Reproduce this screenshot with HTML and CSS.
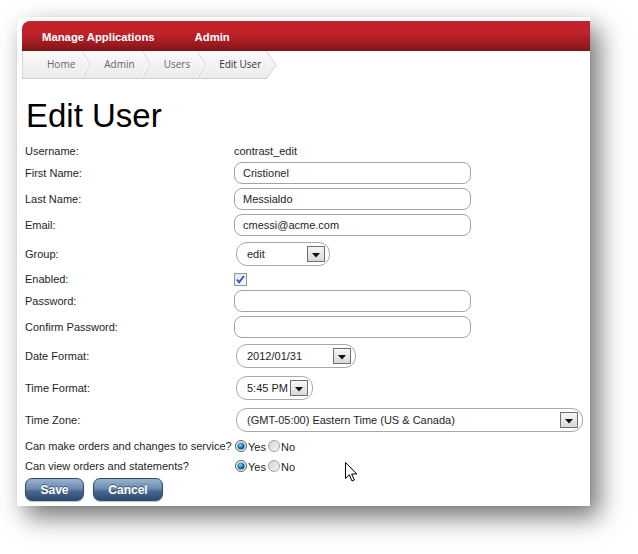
FILE: index.html
```html
<!DOCTYPE html>
<html>
<head>
<meta charset="utf-8">
<link rel="stylesheet" href="styles.css">
</head>
<body>
<div class="card">
  <div class="topnav">
    <span class="nav-item">Manage Applications</span>
    <span class="nav-item">Admin</span>
  </div>
  <div class="crumbs">
    <div class="crumb-bar">
      <span class="crumb first">Home</span>
      <svg class="sep" width="10" height="27" viewBox="0 0 10 27"><path d="M1.5 0 L9 13.5 L1.5 27" fill="none" stroke="#d2d2d2"/><path d="M0.5 0 L8 13.5 L0.5 27" fill="none" stroke="#ffffff" stroke-opacity="0.8"/></svg>
      <span class="crumb">Admin</span>
      <svg class="sep" width="10" height="27" viewBox="0 0 10 27"><path d="M1.5 0 L9 13.5 L1.5 27" fill="none" stroke="#d2d2d2"/><path d="M0.5 0 L8 13.5 L0.5 27" fill="none" stroke="#ffffff" stroke-opacity="0.8"/></svg>
      <span class="crumb">Users</span>
      <svg class="sep" width="10" height="27" viewBox="0 0 10 27"><path d="M1.5 0 L9 13.5 L1.5 27" fill="none" stroke="#d2d2d2"/><path d="M0.5 0 L8 13.5 L0.5 27" fill="none" stroke="#ffffff" stroke-opacity="0.8"/></svg>
      <span class="crumb current">Edit User</span>
    </div>
    <svg class="sep-end" width="11" height="28" viewBox="0 0 11 28">
      <defs><linearGradient id="cg" x1="0" y1="0" x2="0" y2="1"><stop offset="0" stop-color="#fafafa"/><stop offset="1" stop-color="#ebebeb"/></linearGradient></defs>
      <polygon points="0,0 10,14 0,28" fill="url(#cg)"/>
      <path d="M0 0 L10.3 14 L0 28" fill="none" stroke="#cfcfcf"/>
    </svg>
  </div>

  <div class="content">
    <h1 class="title">Edit User</h1>
    <div class="form">
      <div class="row r-text"><span class="lbl">Username:</span><span class="val">contrast_edit</span></div>
      <div class="row r-input"><span class="lbl">First Name:</span><span class="field">Cristionel</span></div>
      <div class="row r-input"><span class="lbl">Last Name:</span><span class="field">Messialdo</span></div>
      <div class="row r-input"><span class="lbl">Email:</span><span class="field">cmessi@acme.com</span></div>
      <div class="row r-select"><span class="lbl">Group:</span>
        <span class="select w-group"><span>edit</span><span class="arrow"><svg width="8" height="5" viewBox="0 0 8 5"><polygon points="0,0 8,0 4,4.5" fill="#111"/></svg></span></span>
      </div>
      <div class="row r-check"><span class="lbl">Enabled:</span>
        <span class="check"><svg width="13" height="13" viewBox="0 0 13 13"><defs><linearGradient id="kb" x1="0" y1="0" x2="1" y2="1"><stop offset="0" stop-color="#dfe3ee"/><stop offset="1" stop-color="#fbfbfd"/></linearGradient></defs><rect x="0.5" y="0.5" width="12" height="12" fill="url(#kb)" stroke="#8f95a6"/><path d="M3 6.5 L5.2 9.3 L10 3" fill="none" stroke="#3a4fa8" stroke-width="1.8"/></svg></span>
      </div>
      <div class="row r-input"><span class="lbl">Password:</span><span class="field"></span></div>
      <div class="row r-input"><span class="lbl">Confirm Password:</span><span class="field"></span></div>
      <div class="row r-select"><span class="lbl">Date Format:</span>
        <span class="select w-date"><span>2012/01/31</span><span class="arrow"><svg width="8" height="5" viewBox="0 0 8 5"><polygon points="0,0 8,0 4,4.5" fill="#111"/></svg></span></span>
      </div>
      <div class="row r-select"><span class="lbl">Time Format:</span>
        <span class="select w-time"><span>5:45 PM</span><span class="arrow"><svg width="8" height="5" viewBox="0 0 8 5"><polygon points="0,0 8,0 4,4.5" fill="#111"/></svg></span></span>
      </div>
      <div class="row r-select"><span class="lbl">Time Zone:</span>
        <span class="select w-tz"><span>(GMT-05:00) Eastern Time (US &amp; Canada)</span><span class="arrow"><svg width="8" height="5" viewBox="0 0 8 5"><polygon points="0,0 8,0 4,4.5" fill="#111"/></svg></span></span>
      </div>
      <div class="row r-radio"><span class="lbl">Can make orders and changes to service?</span>
        <span class="radios">
          <svg class="radio" width="12" height="12" viewBox="0 0 12 12"><defs><radialGradient id="ron" cx="0.4" cy="0.35" r="0.6"><stop offset="0" stop-color="#8fd8f5"/><stop offset="0.5" stop-color="#2a8fc4"/><stop offset="1" stop-color="#0c4e7c"/></radialGradient></defs><circle cx="6" cy="6" r="5.5" fill="#e9eef3" stroke="#55606c"/><circle cx="6" cy="6" r="3.6" fill="url(#ron)"/></svg><span class="rtxt">Yes</span>
          <svg class="radio" width="12" height="12" viewBox="0 0 12 12"><defs><linearGradient id="roff" x1="0" y1="0" x2="1" y2="1"><stop offset="0" stop-color="#cfcfcf"/><stop offset="1" stop-color="#fafafa"/></linearGradient></defs><circle cx="6" cy="6" r="5.5" fill="url(#roff)" stroke="#a3a3a3"/></svg><span class="rtxt">No</span>
        </span>
      </div>
      <div class="row r-radio"><span class="lbl">Can view orders and statements?</span>
        <span class="radios">
          <svg class="radio" width="12" height="12" viewBox="0 0 12 12"><circle cx="6" cy="6" r="5.5" fill="#e9eef3" stroke="#55606c"/><circle cx="6" cy="6" r="3.6" fill="url(#ron)"/></svg><span class="rtxt">Yes</span>
          <svg class="radio" width="12" height="12" viewBox="0 0 12 12"><circle cx="6" cy="6" r="5.5" fill="url(#roff)" stroke="#a3a3a3"/></svg><span class="rtxt">No</span>
        </span>
      </div>
    </div>
    <div class="buttons">
      <button class="btn btn-save">Save</button>
      <button class="btn btn-cancel">Cancel</button>
    </div>
  </div>

  <svg class="cursor" width="13" height="20" viewBox="0 0 13 20"><path d="M0.5 0.5 L0.5 16.5 L4.3 12.8 L7 19 L9.3 18 L6.7 12 L11.8 12 Z" fill="#fff" stroke="#000" stroke-linejoin="miter"/></svg>
</div>
</body>
</html>
```

FILE: styles.css
```css
* { box-sizing: border-box; }

html, body {
  margin: 0;
  padding: 0;
  background: #ffffff;
}

body {
  font-family: "Liberation Sans", Arial, sans-serif;
  font-size: 11px;
  color: #1e1e1e;
  padding: 17px;
  width: 638px;
  height: 554px;
  overflow: hidden;
}

.card {
  position: relative;
  width: 573px;
  height: 489px;
  background: #fff;
  padding: 4px 0 0 5px;
  box-shadow: 0 0 3px rgba(0,0,0,0.05), 9px 11px 24px rgba(0,0,0,0.55);
}

/* top red navigation */
.topnav {
  height: 30px;
  display: flex;
  align-items: center;
  border-top-left-radius: 8px;
  background: linear-gradient(to bottom, #c3232c 0%, #bf222a 40%, #a01b21 75%, #7b1416 100%);
}
.nav-item {
  color: #fff;
  font-weight: bold;
  font-size: 11.3px;
  padding: 1px 20px 0;
}

/* breadcrumbs */
.crumbs {
  display: flex;
  height: 28px;
}
.crumb-bar {
  display: flex;
  align-items: flex-start;
  height: 28px;
  background: linear-gradient(to bottom, #fafafa, #ebebeb);
  border-left: 1px solid #d4d4d4;
  border-bottom: 1px solid #cfcfcf;
}
.crumb {
  font-family: "Open Sans", "Liberation Sans", sans-serif;
  font-size: 10px;
  color: #666;
  line-height: 27px;
  padding: 0 6px 0 13px;
}
.crumb.first { padding-left: 24px; }
.crumb.current { color: #333; padding-right: 5px; }
.sep { display: block; }
.sep-end { display: block; }

/* content */
.content {
  padding-left: 3px;
}
.title {
  font-family: "Liberation Sans", Arial, sans-serif;
  font-weight: normal;
  font-size: 33px;
  line-height: 40px;
  margin: 17px 0 6px 1px;
  color: #000;
}

.form {
  display: flex;
  flex-direction: column;
}
.row {
  display: grid;
  grid-template-columns: 209px 1fr;
  align-items: center;
}
.r-text { height: 18px; }
.r-input { height: 26px; }
.r-select { height: 32px; }
.r-check { height: 18px; }
.r-radio { height: 20px; }

.lbl { color: #1e1e1e; }
.val { color: #1e1e1e; }

.field {
  display: flex;
  align-items: center;
  width: 237px;
  height: 22px;
  border: 1px solid #a4a4a4;
  border-radius: 8px;
  padding: 0 8px;
  color: #1e1e1e;
  background: #fff;
}

.select {
  display: inline-flex;
  align-items: center;
  justify-content: space-between;
  gap: 2px;
  height: 24px;
  margin-left: 2px;
  border: 1px solid #a8a8a8;
  border-radius: 11px;
  padding: 0 4px 0 10px;
  background: #fff;
  color: #1e1e1e;
  justify-self: start;
}
.w-group { width: 94px; }
.w-date { width: 120px; }
.w-time { width: auto; }
.w-tz { width: 347px; }

.arrow {
  display: flex;
  align-items: center;
  justify-content: center;
  width: 18px;
  height: 16px;
  border: 1px solid #6f6f6f;
  background: linear-gradient(to bottom, #f6f6f6, #d9d9d9);
  padding-top: 3px;
}
.arrow svg { display: block; }

.check { display: flex; align-items: center; }
.check svg { display: block; }

.radios {
  display: flex;
  align-items: center;
  margin-left: 1px;
}
.radio { display: block; }
.rtxt {
  margin-left: 1px;
  margin-right: 2px;
  padding-top: 1px;
}

/* buttons */
.buttons {
  display: flex;
  gap: 9px;
  margin-top: 2px;
}
.btn {
  height: 23px;
  border: 1px solid #2f4a6c;
  border-radius: 7px;
  background: linear-gradient(to bottom, #9bb3cf 0%, #6c8bb0 45%, #46678f 60%, #2b4a70 100%);
  color: #fff;
  font-family: "Liberation Sans", Arial, sans-serif;
  font-weight: bold;
  font-size: 12px;
  text-shadow: 0 -1px 0 rgba(0,0,0,0.45);
  padding: 0;
  box-shadow: 0 1px 1px rgba(0,0,0,0.25);
}
.btn-save { width: 59px; }
.btn-cancel { width: 70px; }

.cursor {
  position: absolute;
  left: 328px;
  top: 445px;
}
```
